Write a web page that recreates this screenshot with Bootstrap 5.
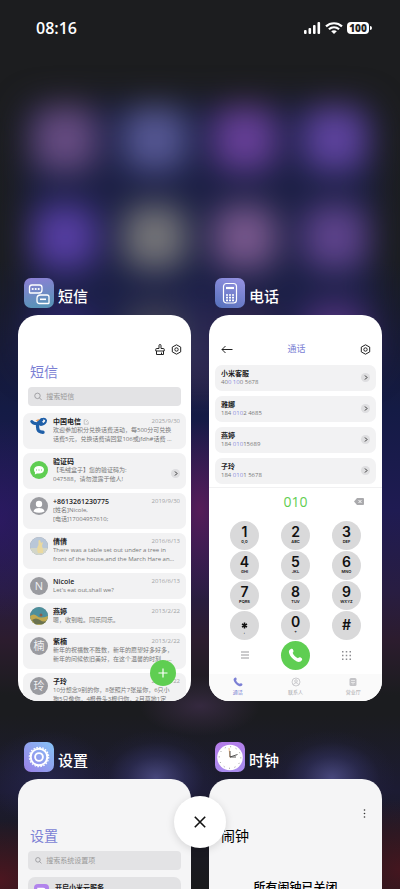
<!DOCTYPE html>
<html lang="zh-CN">
<head>
<meta charset="utf-8">
<meta name="viewport" content="width=device-width, initial-scale=1">
<title>最近任务</title>
<link href="https://cdn.jsdelivr.net/npm/bootstrap@5.3.0/dist/css/bootstrap.min.css" rel="stylesheet">
<style>
  :root { --violet: #7b7fd4; --green: #5fce52; --ink: #1d1d1f; --soft: #777; }
  body {
    font-family: "Open Sans", "Noto Sans CJK SC", sans-serif;
    height: 100vh; min-height: 600px; overflow: hidden; color: var(--ink);
    background:
      radial-gradient(64px 48px at 39% 778px, #52528fcc, #34346688 45%, #26264a33 75%, transparent),
      radial-gradient(64px 48px at 83% 778px, #52528fcc, #34346688 45%, #26264a33 75%, transparent),
      radial-gradient(64px 48px at 12% 778px, #2a2a5c99, transparent),
      radial-gradient(60px 30px at 50% 706px, #35293f, transparent),
      radial-gradient(44px 90px at 50% 510px, #561c58, transparent),
      radial-gradient(50px 70px at 50% 345px, #44335c, transparent),
      radial-gradient(60px 100px at 0 520px, #32186a99, transparent),
      radial-gradient(80px 60px at 0 880px, #4c1620, transparent),
      radial-gradient(80px 70px at 100% 870px, #44161f, transparent),
      linear-gradient(#1c1d1f 0 90px, #1b1d20 260px, #171a34 340px, #141b45 410px, #1f1b52 510px, #281d42 590px, #2c1c2e 640px, #1b1c1f 695px 715px, #1c1b33 790px, #1b1a26 830px, #191a1c);
  }
  .wallpaper { position: absolute; left: 0; right: 0; top: 107px; padding: 0 20px; display: grid; grid-template-columns: repeat(4, 1fr); justify-items: center; row-gap: 34px; filter: blur(16px); }
  .wallpaper::before { content: ""; position: absolute; inset: -4px 24px; background: #1b2050; border-radius: 20px; opacity: .75; }
  .wallpaper span { position: relative; width: 64px; height: 64px; border-radius: 20px; opacity: .94; }
  .status-bar { height: 56px; padding: 0 29px 0 36px; color: #fff; }
  .clock-text { font-size: 16px; font-weight: 600; line-height: 20px; }
  .signals { gap: 4px; }
  .battery { background: #fff; color: #222; border-radius: 4px; height: 12px; width: 22px; font-size: 10px; line-height: 12px; font-weight: 800; position: relative; margin-right: 2px; }
  .battery::after { content: ""; position: absolute; right: -3px; top: 4px; width: 2px; height: 4px; background: #fff; border-radius: 0 2px 2px 0; }
  .tasks { display: grid; grid-template-columns: 1fr 1fr; column-gap: 18px; row-gap: 41px; padding: 222px 18px 0; }
  .task { min-width: 0; }
  .task-label { height: 30px; margin: 0 6px 7px; gap: 4px; color: #fff; font-size: 15px; line-height: 24px; font-weight: 500; }
  .app-icon { width: 30px; height: 30px; flex: none; }
  .screen { aspect-ratio: 173 / 386; background: #fff; border-radius: 20px; overflow: hidden; position: relative; }
  .screen-gray { background: #f5f5f6; }
  .tools { height: 40px; padding: 28px 9px 0; gap: 4px; }
  .tools-menu { padding-right: 12px; }
  .plain { border: 0; background: none; padding: 0; display: flex; align-items: center; justify-content: center; }
  .tools .plain, .call-head .plain { width: 12px; height: 12px; }
  .screen-title { font-size: 14px; line-height: 20px; margin: 7px 0 5px 12px; color: var(--violet); font-weight: 400; }
  .finder { margin: 0 10px; height: 19px; border-radius: 4px; background: #e3e3e5; padding: 0 6px; gap: 4px; }
  .finder input { border: 0; background: none; outline: 0; padding: 0; font-size: 7px; line-height: 12px; width: 100%; min-width: 0; color: #555; }
  .finder input::placeholder { color: #999; opacity: 1; }
  .msg-list { padding: 7px 5px 0; display: grid; gap: 4px; }
  .msg { background: #f2f2f3; border-radius: 7px; padding: 4px 6px 0 7px; min-height: 26px; gap: 5px; font-size: 6px; line-height: 9px; color: var(--soft); text-decoration: none; white-space: nowrap; }
  .msg.long { min-height: 36px; }
  .who { font-size: 7px; font-weight: 700; color: var(--ink); }
  .who.latin { font-weight: 600; }
  .when { color: #a2a2a5; }
  .face { width: 18px; height: 18px; border-radius: 50%; flex: none; overflow: hidden; background: #9a9ba0; color: #f0f0f2; font-size: 11px; line-height: 18px; text-align: center; }
  .more { width: 9px; height: 9px; border-radius: 50%; background: #dedee0; flex: none; display: flex; align-items: center; justify-content: center; }
  .fab { position: absolute; right: 15px; bottom: 15px; width: 26px; height: 26px; border-radius: 50%; background: var(--green); }
  .call-head { padding: 28px 10px 0 12px; height: 50px; }
  .call-head h2 { font-size: 9px; line-height: 12px; color: var(--violet); margin: 0; font-weight: 400; }
  .call-list { padding: 0 6px; display: grid; gap: 5px; }
  .call { background: #f2f2f3; border-radius: 7px; height: 26px; padding: 0 6px; font-size: 6px; line-height: 9px; color: var(--soft); text-decoration: none; }
  .call b { font-weight: 400; color: #8a8de0; }
  .pad { margin-top: 3px; border-top: 1px solid #f1f1f2; padding: 4px 10px 0; }
  .dialled { display: grid; grid-template-columns: repeat(3, 1fr); align-items: center; height: 20px; margin-bottom: 9px; }
  .dialled output { grid-column: 2; font-size: 14px; line-height: 20px; color: var(--green); text-align: center; }
  .keys { display: grid; grid-template-columns: repeat(3, 1fr); justify-items: center; row-gap: 1px; }
  .key { width: 29px; height: 29px; border: 0; border-radius: 50%; background: #d9d9da; padding: 4px 0 0; color: #111; font: 600 14px/14px Inter, sans-serif; display: flex; flex-direction: column; align-items: center; }
  .key small { font-size: 4px; line-height: 5px; font-weight: 600; }
  .key.solo { padding-top: 7px; }
  .key.dial { background: var(--green); padding: 0; justify-content: center; }
  .tabs { margin-top: 4px; padding-top: 3px; height: 28px; background: #fafafa; }
  .tab { flex: 1 1 0; text-align: center; font-size: 5px; line-height: 8px; color: #a4a4a8; text-decoration: none; }
  .tab.on { color: var(--violet); }
  .tab svg { display: block; margin: 0 auto 1px; }
  .setting { margin: 7px 10px 0; padding: 7px 6px; border-radius: 7px; background: #e2e2e4; gap: 6px; text-decoration: none; }
  .setting svg { flex: none; }
  .setting .who { line-height: 8px; }
  .alarm-state { font-size: 12px; line-height: 18px; font-weight: 500; text-align: center; margin: 33px 0 0; }
  .close-all { position: absolute; left: 50%; bottom: 41px; margin-left: -26px; width: 52px; height: 52px; border-radius: 50%; background: #fff; box-shadow: 0 2px 8px #0002; }
</style>
</head>
<body class="position-relative">

<div class="wallpaper" aria-hidden="true">
  <span style="background:#6b4f86"></span><span style="background:#585a98"></span><span style="background:#6a419c"></span><span style="background:#6245a4"></span>
  <span style="background:#5940a8"></span><span style="background:#79797b"></span><span style="background:#7c5a90"></span><span style="background:#624590"></span>
  <span style="background:#2e2668"></span><span style="background:#444456"></span><span style="background:#33284e"></span><span style="background:#54347e"></span>
</div>

<header class="status-bar position-relative d-flex align-items-center justify-content-between">
  <span class="clock-text">08:16</span>
  <span class="signals d-flex align-items-center">
    <svg width="17" height="12" viewBox="0 0 17 12" fill="#fff" aria-hidden="true"><rect x="0" y="8" width="2.600" height="4" rx="1"/><rect x="4.500" y="6" width="2.600" height="6" rx="1"/><rect x="9" y="3" width="2.600" height="9" rx="1"/><rect x="13.500" y="0" width="2.600" height="12" rx="1"/></svg>
    <svg width="18" height="12" viewBox="0 0 18 12" fill="none" stroke="#fff" stroke-width="2.2" aria-hidden="true"><path d="M1 4.4C5.5.2 12.500.2 17 4.400M3.900 7.300c3-2.700 7.200-2.700 10.200 0"/><path d="M9 12 6.200 9.300c1.600-1.400 4-1.400 5.600 0z" fill="#fff" stroke="none"/></svg>
    <span class="battery text-center">100</span>
  </span>
</header>

<main class="tasks position-relative">

  <section class="task">
    <div class="task-label d-flex align-items-end">
      <svg class="app-icon" viewBox="0 0 30 30" aria-hidden="true"><defs><linearGradient id="g1" x2=".2" y2="1"><stop stop-color="#8e7fd6"/><stop offset="1" stop-color="#5a93b8"/></linearGradient></defs><rect width="30" height="30" rx="7" fill="url(#g1)"/><g fill="none" stroke="#fff" stroke-width="1.300"><path d="M8 7h7.500q2.500 0 2.500 2.500V12q0 3-3 3H6q-.500 0-.500-.500V9.500Q5.500 7 8 7z"/><path d="M16.500 17H23q2 0 2 2v6q0 .500-.500.500h-9q-2.500 0-2.500-2.500v-2.500q0-3.500 3.500-3.500z"/><path d="M16 21.300h6" stroke-width="1.600"/></g><g fill="#fff"><circle cx="8.700" cy="11" r="1.100"/><circle cx="11.700" cy="11" r="1.100"/><circle cx="14.700" cy="11" r="1.100"/></g></svg>
      <span>短信</span>
    </div>
    <div class="screen">
      <div class="tools d-flex justify-content-end">
        <button class="plain" aria-label="清理"><svg width="10" height="11" viewBox="0 0 10 11" fill="none" stroke="#222" stroke-width="1"><path d="M4 4.500V1.500q0-1 1-1t1 1v3h2.500q.700 0 .700.700V7H.800V5.200q0-.700.700-.700zM1.500 7v3.500h7V7M6.500 8.500v2"/></svg></button>
        <button class="plain" aria-label="设置"><svg width="11" height="11" viewBox="0 0 11 11" fill="none" stroke="#222" stroke-width="1"><path d="M5.500.800 9.700 3.100v4.800L5.500 10.200 1.300 7.900V3.100z" stroke-linejoin="round"/><circle cx="5.500" cy="5.500" r="1.700"/></svg></button>
      </div>
      <h2 class="screen-title">短信</h2>
      <label class="finder d-flex align-items-center">
        <svg width="9" height="9" viewBox="0 0 9 9" fill="none" stroke="#8c8c90" stroke-width=".8" aria-hidden="true"><circle cx="3.800" cy="3.800" r="3"/><path d="m6 6 2.500 2.500"/></svg>
        <input type="text" placeholder="搜索短信" aria-label="搜索短信">
      </label>
      <div class="msg-list">
        <a href="#" class="msg long d-flex">
          <svg width="18" height="18" viewBox="0 0 18 18" class="flex-shrink-0" aria-hidden="true"><g fill="none" stroke="#1f5fa8" stroke-linecap="round"><path d="M1.800 4.600C3.500 7.500 8 7 11.500 6.200" stroke-width="3"/><path d="M11.500 3C8 5 6.800 8.500 8 12.500q1 2.800 5 2.700" stroke-width="3.400"/><path d="M11.500 2.200c3.500-1.400 5.500.600 4.300 2.800-1 1.900-3 2.600-5 3" stroke-width="1.800"/></g><path d="M5.500 3.500q2.500-1.800 4.500-1.500L7.500 4.500z" fill="#eda05e"/></svg>
          <span class="flex-fill overflow-hidden">
            <span class="d-flex justify-content-between"><span class="who">中国电信 <svg width="6" height="6" viewBox="0 0 6 6" fill="none" stroke="#aaa" stroke-width=".6" aria-hidden="true"><path d="M3.500.800H1.200v4.400h4V2.500M3 3l2-2"/></svg></span><span class="when">2025/9/30</span></span>
            <span class="d-block">欢迎参加积分兑换话费活动，每500分可兑换</span>
            <span class="d-block">话费5元，兑换话费请回复106或jfdh#话费 …</span>
          </span>
        </a>
        <a href="#" class="msg long d-flex">
          <svg class="mt-1" width="18" height="18" viewBox="0 0 18 18" aria-hidden="true"><circle cx="9" cy="9" r="9" fill="#5fce52"/><path d="M9 5c3 0 5 1.500 5 3.800s-2 3.800-5 3.800q-1 0-2-.200L4.800 13.500l.300-2Q4 10.500 4 8.800C4 6.500 6 5 9 5z" fill="#fff"/><path d="M6 9h1M8.500 9h1M11 9h1" stroke="#5fce52" stroke-width=".9"/></svg>
          <span class="flex-fill overflow-hidden">
            <span class="who d-block">验证码</span>
            <span class="d-block">【毛绒盒子】您的验证码为:</span>
            <span class="d-block">047588，请勿泄露于他人!</span>
          </span>
          <span class="more align-self-center"><svg width="4" height="5" viewBox="0 0 4 5" fill="none" stroke="#333"><path d="m1 .5 2 2-2 2"/></svg></span>
        </a>
        <a href="#" class="msg long d-flex">
          <span class="face"><svg width="18" height="18" viewBox="0 0 18 18" fill="#fff" class="d-block"><circle cx="9" cy="7" r="3.200"/><path d="M3.500 14.500Q4 11 9 11t5.500 3.500Q9 17 3.500 14.500z"/></svg></span>
          <span class="flex-fill overflow-hidden">
            <span class="d-flex justify-content-between"><span class="who latin">+8613261230775</span><span class="when">2019/9/30</span></span>
            <span class="d-block">[姓名]Nicole,</span>
            <span class="d-block">[电话]17004957610;</span>
          </span>
        </a>
        <a href="#" class="msg long d-flex">
          <span class="face"><svg width="18" height="18" viewBox="0 0 18 18" class="d-block"><path fill="#b9c7d8" d="M0 0h18v18H0z"/><path fill="#d3d6c8" d="M0 11h18v7H0z"/><path d="M8 16q-2-5 .500-8L8.500 3.500l1.500-.500 1 3 2-1-1 4q2 4 1 7z" fill="#ead9a0"/></svg></span>
          <span class="flex-fill overflow-hidden">
            <span class="d-flex justify-content-between"><span class="who">倩倩</span><span class="when">2016/6/13</span></span>
            <span class="d-block">There was a table set out under a tree in</span>
            <span class="d-block">front of the house,and the March Hare an…</span>
          </span>
        </a>
        <a href="#" class="msg d-flex">
          <span class="face">N</span>
          <span class="flex-fill overflow-hidden">
            <span class="d-flex justify-content-between"><span class="who latin">Nicole</span><span class="when">2016/6/13</span></span>
            <span class="d-block">Let's eat out,shall we?</span>
          </span>
        </a>
        <a href="#" class="msg d-flex">
          <span class="face"><svg width="18" height="18" viewBox="0 0 18 18" class="d-block"><path fill="#4c8f9c" d="M0 0h18v18H0z"/><path fill="#c0a84e" d="M0 9q4-3 7 0t11 0v9H0z"/><path d="M2 13q4-3 8 0t7 0l-3 4H5z" fill="#6b7350"/><circle cx="11" cy="8" r="1.500" fill="#8d5c46"/></svg></span>
          <span class="flex-fill overflow-hidden">
            <span class="d-flex justify-content-between"><span class="who">燕婷</span><span class="when">2013/2/22</span></span>
            <span class="d-block">嗯，收到啦。同乐同乐。</span>
          </span>
        </a>
        <a href="#" class="msg long d-flex">
          <span class="face">楠</span>
          <span class="flex-fill overflow-hidden">
            <span class="d-flex justify-content-between"><span class="who">紫楠</span><span class="when">2013/2/22</span></span>
            <span class="d-block">新年的祝福数不胜数，新年的愿望好多好多，</span>
            <span class="d-block">新年的问候依旧美好，在这个温馨的时刻，…</span>
          </span>
        </a>
        <a href="#" class="msg long d-flex">
          <span class="face">玲</span>
          <span class="flex-fill overflow-hidden">
            <span class="d-flex justify-content-between"><span class="who">子玲</span><span class="when">2013/2/22</span></span>
            <span class="d-block">10分想念9别的你，8张照片7张是你，6只小</span>
            <span class="d-block">狗5只像你，4根骨头3根归你，2月草地1定</span>
          </span>
        </a>
      </div>
      <button class="plain fab" aria-label="新建短信"><svg width="10" height="10" viewBox="0 0 10 10" stroke="#fff" stroke-width="1.200"><path d="M5 .500v9M.500 5h9"/></svg></button>
    </div>
  </section>

  <section class="task">
    <div class="task-label d-flex align-items-end">
      <svg class="app-icon" viewBox="0 0 30 30" aria-hidden="true"><defs><linearGradient id="g2" x1=".7" x2=".3" y2="1"><stop stop-color="#9290e0"/><stop offset="1" stop-color="#5a73bd"/></linearGradient></defs><rect width="30" height="30" rx="7" fill="url(#g2)"/><rect x="8.500" y="5.500" width="13" height="19.500" rx="3" fill="none" stroke="#fff" stroke-width="1.200"/><path d="M11 10h8" stroke="#fff" stroke-width="2.200"/><path d="M11 17h8M11 19.700h8M11 22.300h8" stroke="#fff" stroke-width="1.700" stroke-dasharray="2 1"/></svg>
      <span>电话</span>
    </div>
    <div class="screen d-flex flex-column">
      <div class="call-head d-flex justify-content-between">
        <button class="plain" aria-label="返回"><svg width="12" height="9" viewBox="0 0 12 9" fill="none" stroke="#222" stroke-width="1"><path d="M11.500 4.500H1M4.500 1 1 4.500 4.500 8"/></svg></button>
        <h2>通话</h2>
        <button class="plain" aria-label="设置"><svg width="11" height="11" viewBox="0 0 11 11" fill="none" stroke="#222" stroke-width="1"><path d="M5.500.800 9.700 3.100v4.800L5.500 10.200 1.300 7.900V3.100z" stroke-linejoin="round"/><circle cx="5.500" cy="5.500" r="1.700"/></svg></button>
      </div>
      <div class="call-list">
        <a href="#" class="call d-flex align-items-center justify-content-between"><span><span class="who d-block">小米客服</span>40<b>0 10</b>0 5678</span><span class="more"><svg width="4" height="5" viewBox="0 0 4 5" fill="none" stroke="#333"><path d="m1 .5 2 2-2 2"/></svg></span></a>
        <a href="#" class="call d-flex align-items-center justify-content-between"><span><span class="who d-block">雅娜</span>184 <b>010</b>2 4685</span><span class="more"><svg width="4" height="5" viewBox="0 0 4 5" fill="none" stroke="#333"><path d="m1 .5 2 2-2 2"/></svg></span></a>
        <a href="#" class="call d-flex align-items-center justify-content-between"><span><span class="who d-block">燕婷</span>184 <b>010</b>15689</span><span class="more"><svg width="4" height="5" viewBox="0 0 4 5" fill="none" stroke="#333"><path d="m1 .5 2 2-2 2"/></svg></span></a>
        <a href="#" class="call d-flex align-items-center justify-content-between"><span><span class="who d-block">子玲</span>184 <b>010</b>1 5678</span><span class="more"><svg width="4" height="5" viewBox="0 0 4 5" fill="none" stroke="#333"><path d="m1 .5 2 2-2 2"/></svg></span></a>
      </div>
      <div class="pad">
        <div class="dialled">
          <output>010</output>
          <button class="plain" aria-label="删除"><svg width="10" height="7" viewBox="0 0 10 7" class="ms-4"><path d="M3 0h6q1 0 1 1v5q0 1-1 1H3L0 3.500z" fill="#aaaaad"/><path d="m4.500 2 3 3m0-3-3 3" stroke="#fff" stroke-width=".9"/></svg></button>
        </div>
        <div class="keys">
          <button class="key">1<small>0,0</small></button>
          <button class="key">2<small>ABC</small></button>
          <button class="key">3<small>DEF</small></button>
          <button class="key">4<small>GHI</small></button>
          <button class="key">5<small>JKL</small></button>
          <button class="key">6<small>MNO</small></button>
          <button class="key">7<small>PQRS</small></button>
          <button class="key">8<small>TUV</small></button>
          <button class="key">9<small>WXYZ</small></button>
          <button class="key" aria-label="*"><svg width="7" height="14" viewBox="0 0 7 14" stroke="#111" stroke-width="1.500"><path d="M3.500 7.500v6M1 9l5 3M6 9l-5 3"/></svg><small>,</small></button>
          <button class="key">0<small>+</small></button>
          <button class="key solo">#</button>
          <button class="plain" aria-label="菜单"><svg width="8" height="8" viewBox="0 0 8 8" stroke="#8c8c90" stroke-width=".9"><path d="M0 1h8M0 4h8M0 7h8"/></svg></button>
          <button class="key dial" aria-label="拨打"><svg width="15" height="15" viewBox="0 0 15 15" fill="#fff"><path d="M2.800 1C4 .300 4.800.800 5.200 1.900c.500 1.300.500 2-.600 2.900C5.500 7.200 7.500 9.300 10 10.300c1-1.100 1.700-1.300 3-.600 1.200.700 1.600 1.500.800 2.600-1 1.500-2.800 2.200-5 1.200C5 11.700 2 8.500 1 4.800.600 3 1.300 1.800 2.800 1z"/></svg></button>
          <button class="plain" aria-label="键盘"><svg width="9" height="9" viewBox="0 0 9 9" stroke="#8c8c90" stroke-width="1.500" stroke-dasharray="1.500 2.250"><path d="M0 .75h9M0 4.500h9M0 8.250h9"/></svg></button>
        </div>
      </div>
      <nav class="tabs d-flex">
        <a href="#" class="tab on"><svg width="10" height="10" viewBox="0 0 15 15" fill="#7b7fd4"><path d="M2.800 1C4 .300 4.800.800 5.200 1.900c.500 1.300.500 2-.600 2.900C5.500 7.200 7.500 9.300 10 10.300c1-1.100 1.700-1.300 3-.600 1.200.700 1.600 1.500.800 2.600-1 1.500-2.800 2.200-5 1.200C5 11.700 2 8.500 1 4.800.600 3 1.300 1.800 2.800 1z"/></svg>通话</a>
        <a href="#" class="tab"><svg width="10" height="10" viewBox="0 0 10 10" fill="none" stroke="#b8b8bb" stroke-width=".7"><circle cx="5" cy="5" r="4"/><circle cx="5" cy="4" r="1.300"/><path d="M2.500 7.800q.300-2 2.500-2t2.500 2"/></svg>联系人</a>
        <a href="#" class="tab"><svg width="10" height="10" viewBox="0 0 10 10"><rect x="1.500" y="1" width="7" height="8" rx="1.500" fill="#c4c4c7"/><path d="M3 3.500h4M3 5.500h4M5 5.500v2" stroke="#f4f4f4" stroke-width=".7"/></svg>营业厅</a>
      </nav>
    </div>
  </section>

  <section class="task">
    <div class="task-label d-flex align-items-end">
      <svg class="app-icon" viewBox="0 0 30 30" aria-hidden="true"><defs><linearGradient id="g3" x1="1" x2="0" y2="1"><stop stop-color="#86c4f6"/><stop offset="1" stop-color="#9a7fe8"/></linearGradient></defs><rect width="30" height="30" rx="7" fill="url(#g3)"/><g fill="none" stroke="#fff"><circle cx="15" cy="15" r="8.300" stroke-width="2"/><circle cx="15" cy="15" r="9.700" stroke-width="1.200" stroke-dasharray="1.600 1.447"/><circle cx="15" cy="15" r="3.900" stroke-width="1.900"/></g></svg>
      <span>设置</span>
    </div>
    <div class="screen screen-gray">
      <div class="tools"></div>
      <h2 class="screen-title">设置</h2>
      <label class="finder d-flex align-items-center">
        <svg width="9" height="9" viewBox="0 0 9 9" fill="none" stroke="#8c8c90" stroke-width=".8" aria-hidden="true"><circle cx="4.300" cy="3.800" r="2.500"/><path d="m6.200 5.700 2 2"/></svg>
        <input type="text" placeholder="搜索系统设置项" aria-label="搜索系统设置项">
      </label>
      <a href="#" class="setting d-flex">
        <svg width="15" height="15" viewBox="0 0 15 15" aria-hidden="true"><rect width="15" height="15" rx="4" fill="#b183ec"/><path d="M4 11V4.500h5q2 0 2 2V11M7 7v4" fill="none" stroke="#fff" stroke-width="1.500"/></svg>
        <span class="who">开启小米云服务</span>
      </a>
    </div>
  </section>

  <section class="task">
    <div class="task-label d-flex align-items-end">
      <svg class="app-icon" viewBox="0 0 30 30" aria-hidden="true"><defs><linearGradient id="g4" x2=".3" y2="1"><stop stop-color="#b57be8"/><stop offset="1" stop-color="#a98bee"/></linearGradient></defs><rect width="30" height="30" rx="7" fill="url(#g4)"/><circle cx="15" cy="15.500" r="12.800" fill="#fff"/><circle cx="15" cy="15.500" r="10.800" fill="none" stroke="#777" stroke-dasharray=".8 4.855"/><path d="M15 15.500 14 6" stroke="#e8a15c" stroke-width=".7"/><path d="M15 9v6l7.500-2.500M15 15h6" fill="none" stroke="#444" stroke-width=".9"/></svg>
      <span>时钟</span>
    </div>
    <div class="screen screen-gray">
      <div class="tools tools-menu d-flex justify-content-end">
        <button class="plain" aria-label="更多"><svg width="3" height="9" viewBox="0 0 3 9" fill="#333"><circle cx="1.500" cy="1" r=".8"/><circle cx="1.500" cy="4.500" r=".8"/><circle cx="1.500" cy="8" r=".8"/></svg></button>
      </div>
      <h2 class="screen-title text-black">闹钟</h2>
      <p class="alarm-state text-black">所有闹钟已关闭</p>
    </div>
  </section>
</main>

<button class="plain close-all" aria-label="全部关闭"><svg width="12" height="12" viewBox="0 0 12 12" stroke="#111" stroke-width="1.600"><path d="m.8.800 10.400 10.400M11.200.800.800 11.200"/></svg></button>

<script src="https://cdn.jsdelivr.net/npm/bootstrap@5.3.0/dist/js/bootstrap.bundle.min.js"></script>
</body>
</html>
